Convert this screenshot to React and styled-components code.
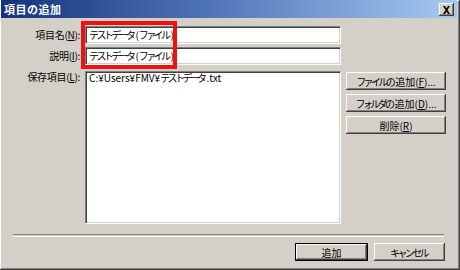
import React from 'react';
import styled, { createGlobalStyle, css } from 'styled-components';

const face = '#d4d0c8';
const shadow = '#808080';
const darkShadow = '#404040';

const GlobalStyle = createGlobalStyle`
    html, body {
        margin: 0;
        padding: 0;
        background: ${face};
    }
    body {
        font-family: "Noto Sans CJK JP", "Noto Sans", sans-serif;
        font-size: 10px;
        color: #000;
    }
`;

const Window = styled.div`
    position: relative;
    width: 460px;
    height: 270px;
    box-sizing: border-box;
    background: ${face};
    border-right: 1px solid ${darkShadow};
    border-bottom: 1px solid ${darkShadow};
    box-shadow: inset 1px 1px 0 #fff, inset -1px -1px 0 ${shadow};
    padding: 0 2px 2px 1px;
    display: flex;
    flex-direction: column;
`;

const TitleBar = styled.div`
    height: 18px;
    flex: none;
    display: flex;
    align-items: center;
    justify-content: space-between;
    padding: 0 3px 0 3px;
    background: linear-gradient(90deg, #14337c 0%, #4f73b8 45%, #a6caf0 100%);
`;

const Title = styled.span`
    color: #fff;
    font-weight: bold;
    font-size: 11px;
    letter-spacing: 0.5px;
`;

const CloseButton = styled.button`
    width: 15px;
    height: 13px;
    padding: 0;
    margin-top: 1px;
    display: flex;
    align-items: center;
    justify-content: center;
    background: ${face};
    border: none;
    box-shadow: inset -1px -1px 0 ${darkShadow}, inset 1px 1px 0 #fff, inset -2px -2px 0 ${shadow};
`;

const Body = styled.div`
    flex: 1;
    display: flex;
    flex-direction: column;
    padding: 8px 11px 0 11px;
`;

const Form = styled.div`
    display: grid;
    grid-template-columns: 68px 256px 100px;
    grid-template-rows: 18px 18px 156px;
    column-gap: 5px;
    row-gap: 3px;
`;

const Label = styled.label`
    text-align: right;
    line-height: 18px;
    white-space: nowrap;
    letter-spacing: -0.3px;
    ${p => p.$top && css`
        line-height: 14px;
        margin-top: 2px;
    `}
`;

const Key = styled.span`
    text-decoration: underline;
    text-underline-offset: 1px;
`;

// katakana runs are squeezed to the narrow widths of the old UI font
const Narrow = styled.span`
    letter-spacing: -2.6px;
    margin-right: 2px;
`;

const sunken = css`
    box-sizing: border-box;
    background: #fff;
    border-top: 1px solid ${shadow};
    border-left: 1px solid ${shadow};
    border-right: 1px solid #fff;
    border-bottom: 1px solid #fff;
    box-shadow: inset 1px 1px 0 ${darkShadow}, inset -1px -1px 0 ${face};
`;

const TextBox = styled.div`
    ${sunken}
    padding: 0 3px;
    line-height: 16px;
    white-space: nowrap;
`;

const ListBox = styled.div`
    ${sunken}
    margin-top: 3px;
    padding: 0 3px;
    line-height: 12px;
    white-space: nowrap;
`;

const SideButtons = styled.div`
    display: flex;
    flex-direction: column;
    gap: 4px;
    padding-top: 4px;
`;

const Button = styled.button`
    box-sizing: border-box;
    width: ${p => p.$width || 100}px;
    height: 18px;
    padding: 0;
    font: inherit;
    color: #000;
    white-space: nowrap;
    background: ${face};
    border: none;
    box-shadow: inset -1px -1px 0 ${darkShadow}, inset 1px 1px 0 #fff, inset -2px -2px 0 ${shadow};
    ${p => p.$default && css`
        box-shadow: inset 0 0 0 1px #000, inset -2px -2px 0 ${darkShadow}, inset 2px 2px 0 #fff, inset -3px -3px 0 ${shadow};
    `}
`;

const Separator = styled.div`
    height: 1px;
    margin: 10px 2px 0 1px;
    border-top: 1px solid ${shadow};
    border-bottom: 1px solid #fff;
`;

const Footer = styled.div`
    display: flex;
    justify-content: flex-end;
    gap: 6px;
    padding: 6px 1px 0 0;
`;

const Highlight = styled.div`
    position: absolute;
    left: 81px;
    top: 21px;
    width: 96px;
    height: 48px;
    box-sizing: border-box;
    border: 4px solid #ee1111;
    pointer-events: none;
`;

const CloseIcon = () => (
    <svg width="9" height="8" viewBox="0 0 9 8">
        <path d="M1 0h2l1.5 2.5L6 0h2L5.5 4 8 8H6L4.5 5.5 3 8H1l2.5-4z" fill="#000" />
    </svg>
);

export default function App() {
    return (
        <>
            <GlobalStyle />
            <Window>
                <TitleBar>
                    <Title>項目の追加</Title>
                    <CloseButton><CloseIcon /></CloseButton>
                </TitleBar>
                <Body>
                    <Form>
                        <Label>項目名(<Key>N</Key>):</Label>
                        <TextBox><Narrow>テストデータ</Narrow>(<Narrow>ファイル</Narrow>)</TextBox>
                        <div />
                        <Label>説明(<Key>I</Key>):</Label>
                        <TextBox><Narrow>テストデータ</Narrow>(<Narrow>ファイル</Narrow>)</TextBox>
                        <div />
                        <Label $top>保存項目(<Key>L</Key>):</Label>
                        <ListBox>C:¥Users¥FMV¥<Narrow>テストデータ</Narrow>.txt</ListBox>
                        <SideButtons>
                            <Button><Narrow>ファイルの</Narrow>追加(<Key>F</Key>)...</Button>
                            <Button><Narrow>フォルダの</Narrow>追加(<Key>D</Key>)...</Button>
                            <Button>削除(<Key>R</Key>)</Button>
                        </SideButtons>
                    </Form>
                    <Separator />
                    <Footer>
                        <Button $default $width={73}>追加</Button>
                        <Button $width={71}><Narrow>キャンセル</Narrow></Button>
                    </Footer>
                </Body>
                <Highlight />
            </Window>
        </>
    );
}
